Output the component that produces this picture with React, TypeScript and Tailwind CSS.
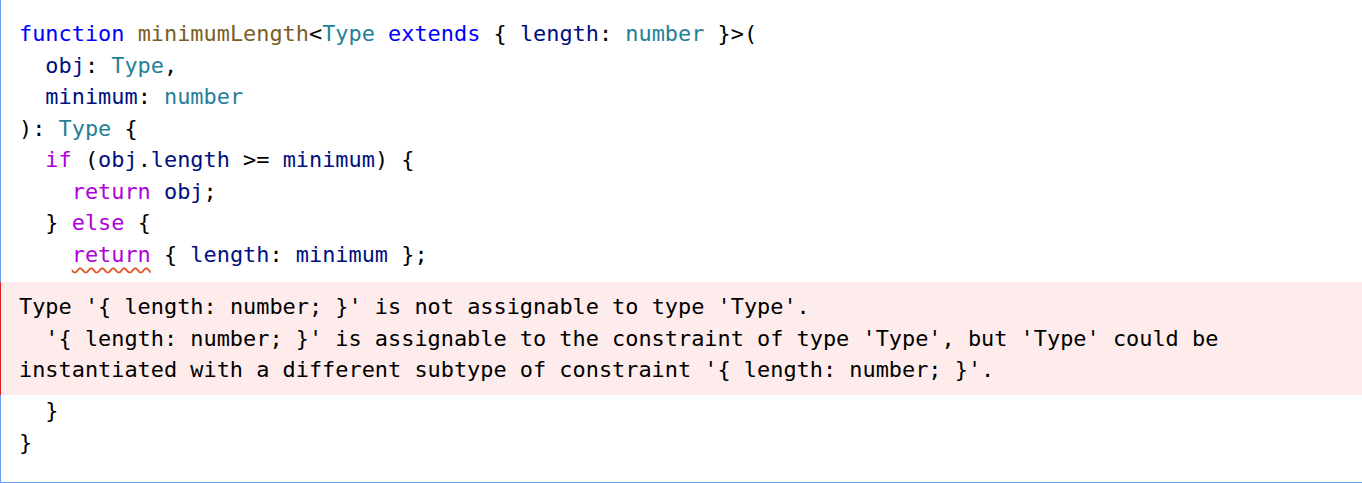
const kw = "text-[#0000ff]";
const fn = "text-[#795e26]";
const ty = "text-[#267f99]";
const vr = "text-[#001080]";
const ctl = "text-[#af00db]";

const Line = ({ children }: { children?: React.ReactNode }) => (
  <div className="h-[31.5px] leading-[31.5px] whitespace-pre">{children}</div>
);

export default function App() {
  return (
    <div className="w-[1362px] h-[483px] bg-white">
      <div
        className="h-[483px] flex flex-col border-b border-[#6d9cf5] text-[21.9px] text-black"
        style={{ fontFamily: '"DejaVu Sans Mono", "Liberation Mono", monospace' }}
      >
        <div className="border-l border-[#6d9cf5] pl-[18px] pt-[18px] pb-[12px]">
          <Line>
            <span className={kw}>function</span> <span className={fn}>minimumLength</span>
            {"<"}
            <span className={ty}>Type</span> <span className={kw}>extends</span> {"{ "}
            <span className={vr}>length</span>: <span className={ty}>number</span>
            {" }>("}
          </Line>
          <Line>
            {"  "}
            <span className={vr}>obj</span>: <span className={ty}>Type</span>,
          </Line>
          <Line>
            {"  "}
            <span className={vr}>minimum</span>: <span className={ty}>number</span>
          </Line>
          <Line>
            {"): "}
            <span className={ty}>Type</span> {"{"}
          </Line>
          <Line>
            {"  "}
            <span className={ctl}>if</span> (<span className={vr}>obj</span>.
            <span className={vr}>length</span> {">="} <span className={vr}>minimum</span>) {"{"}
          </Line>
          <Line>
            {"    "}
            <span className={ctl}>return</span> <span className={vr}>obj</span>;
          </Line>
          <Line>
            {"  } "}
            <span className={ctl}>else</span> {"{"}
          </Line>
          <Line>
            {"    "}
            <span
              className={`${ctl} underline decoration-wavy decoration-[#e2572b] decoration-[1.5px] underline-offset-[5px]`}
            >
              return
            </span>{" { "}
            <span className={vr}>length</span>: <span className={vr}>minimum</span>
            {" };"}
          </Line>
        </div>

        <div className="h-[113px] border-l border-[#d92323] bg-[#fdeceb] pl-[18px] pt-[9px]">
          <Line>Type '{"{"} length: number; {"}"}' is not assignable to type 'Type'.</Line>
          <Line>
            {"  '{ length: number; }' is assignable to the constraint of type 'Type', but 'Type' could be"}
          </Line>
          <Line>{"instantiated with a different subtype of constraint '{ length: number; }'."}</Line>
        </div>

        <div className="flex-1 border-l border-[#6d9cf5] pl-[18px]">
          <Line>{"  }"}</Line>
          <Line>{"}"}</Line>
        </div>
      </div>
    </div>
  );
}
